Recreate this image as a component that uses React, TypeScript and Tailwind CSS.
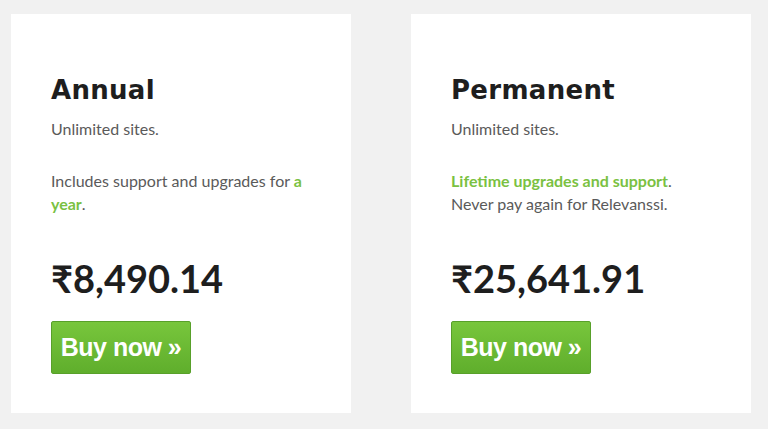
import React from "react";

function Card({ title, children, price }: { title: string; children: React.ReactNode; price: string }) {
  return (
    <div className="w-[340px] h-[399px] bg-white pl-[40px] pr-[28px] pt-[59px] flex flex-col">
      <h2 className="text-[26px] leading-[34px] font-bold text-[#1e1e1e] tracking-[0.3px]" style={{ fontFamily: '"DejaVu Sans", sans-serif' }}>
        {title}
      </h2>
      <div className="mt-[10px] text-[16px] leading-[23px] text-[#5a5a5a]" style={{ fontFamily: 'Lato, sans-serif' }}>
        {children}
      </div>
      <div className="mt-[41px] flex flex-col items-start">
        <div className="text-[38px] leading-[44px] font-bold text-[#1e1e1e]" style={{ fontFamily: 'Lato, sans-serif' }}>
          {price}
        </div>
        <button className="mt-[21px] w-[140px] h-[53px] rounded-[2px] border border-[#58a02a] bg-gradient-to-b from-[#78c63c] to-[#5fae2c] text-white text-[25px] font-bold tracking-[-0.5px]" style={{ fontFamily: '"Liberation Sans", Arial, sans-serif' }}>
          Buy now »
        </button>
      </div>
    </div>
  );
}

export default function App() {
  return (
    <div className="w-[768px] h-[429px] bg-[#f1f1f1] pt-[14px] pl-[11px] flex items-start gap-[60px]">
      <Card title="Annual" price="₹8,490.14">
        <p>Unlimited sites.</p>
        <p className="mt-[29px]">
          Includes support and upgrades for <span className="font-bold text-[#7ac142]">a year</span>.
        </p>
      </Card>
      <Card title="Permanent" price="₹25,641.91">
        <p>Unlimited sites.</p>
        <p className="mt-[29px]">
          <span className="font-bold text-[#7ac142]">Lifetime upgrades and support</span>.
          <br />
          Never pay again for Relevanssi.
        </p>
      </Card>
    </div>
  );
}
